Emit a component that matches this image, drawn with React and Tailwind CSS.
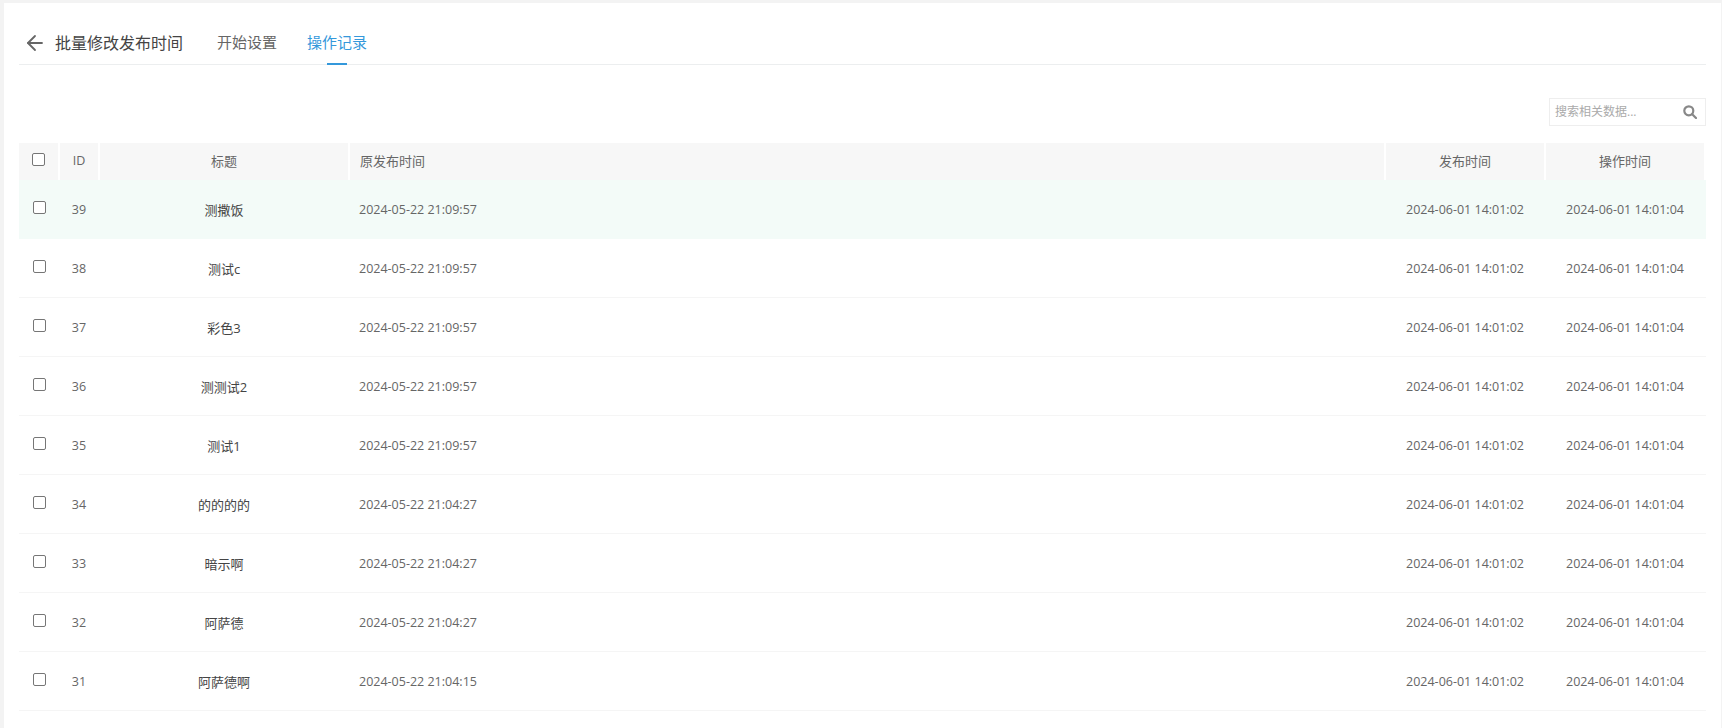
import React from 'react';
import { ArrowLeft } from 'lucide-react';

const rows = [
  { id: 39, title: '测撒饭', origin: '2024-05-22 21:09:57', op: '2024-06-01 14:01:04', active: true },
  { id: 38, title: '测试c', origin: '2024-05-22 21:09:57', op: '2024-06-01 14:01:04' },
  { id: 37, title: '彩色3', origin: '2024-05-22 21:09:57', op: '2024-06-01 14:01:04' },
  { id: 36, title: '测测试2', origin: '2024-05-22 21:09:57', op: '2024-06-01 14:01:04' },
  { id: 35, title: '测试1', origin: '2024-05-22 21:09:57', op: '2024-06-01 14:01:04' },
  { id: 34, title: '的的的的', origin: '2024-05-22 21:04:27', op: '2024-06-01 14:01:04' },
  { id: 33, title: '暗示啊', origin: '2024-05-22 21:04:27', op: '2024-06-01 14:01:04' },
  { id: 32, title: '阿萨德', origin: '2024-05-22 21:04:27', op: '2024-06-01 14:01:04' },
  { id: 31, title: '阿萨德啊', origin: '2024-05-22 21:04:15', op: '2024-06-01 14:01:04' },
];

const Check = ({ className }) => (
  <span className={`block w-[13px] h-[13px] rounded-[2px] border border-[#767676] bg-white ${className}`} />
);

const colClass = 'grid grid-cols-[39px_2px_38px_2px_248px_2px_1034px_2px_158px_2px_158px_2px]';

export default function App() {
  return (
    <div
      className="h-[728px] overflow-hidden bg-[#f3f3f3] pl-1 pt-[3px] pr-px text-[13px] text-[#666]"
      style={{ fontFamily: '"Open Sans", "Noto Sans CJK SC", sans-serif' }}
    >
      <div className="h-full bg-white pl-[15px] pr-[15px]">
        {/* top tabs */}
        <div className="flex h-[62px] items-end border-b border-[#eceeef]">
          <div className="flex h-[35px] items-start">
            <ArrowLeft size={24} strokeWidth={1.8} className="ml-[4px] mt-[2px] text-[#666]" />
            <span className="ml-[8px] mt-[3px] text-[16px] leading-[22px] text-[#444]">批量修改发布时间</span>
            <span className="ml-[34px] mt-[3px] text-[15px] leading-[21px] text-[#666]">开始设置</span>
            <span className="relative ml-[30px] h-full pt-[3px] text-[15px] leading-[21px] text-[#3498db]">
              操作记录
              <span className="absolute bottom-[-1px] left-[20px] h-0.5 w-5 bg-[#3498db]" />
            </span>
          </div>
        </div>

        {/* search */}
        <div className="flex h-[78px] items-start justify-end pt-[33px]">
          <div className="flex h-7 w-[157px] items-center border border-[#eee] pl-[5px] pr-2">
            <span className="flex-1 text-[12px] text-[#aaa]">搜索相关数据...</span>
            <svg width="14" height="14" viewBox="0 0 14 14" fill="none" stroke="#888" strokeWidth="2.2">
              <circle cx="5.8" cy="5.8" r="4.5" />
              <path d="M9.2 9.2l3.8 3.8" strokeLinecap="round" />
            </svg>
          </div>
        </div>

        {/* table */}
        <div className={`${colClass} h-[37px] items-center`}>
          <div className="flex h-full items-center justify-center bg-[#f7f7f7]"><Check className="mb-1" /></div>
          <div />
          <div className="flex h-full items-center justify-center bg-[#f7f7f7] text-[12.5px]">ID</div>
          <div />
          <div className="flex h-full items-center justify-center bg-[#f7f7f7]">标题</div>
          <div />
          <div className="flex h-full items-center bg-[#f7f7f7] pl-2.5">原发布时间</div>
          <div />
          <div className="flex h-full items-center justify-center bg-[#f7f7f7]">发布时间</div>
          <div />
          <div className="flex h-full items-center justify-center bg-[#f7f7f7]">操作时间</div>
          <div />
        </div>
        {rows.map((r) => (
          <div
            key={r.id}
            className={`${colClass} h-[59px] border-b text-[12.5px] ${r.active ? 'border-transparent bg-[#f3fbf8]' : 'border-[#f5f5f5]'}`}
          >
            <div className="flex h-[55px] items-center justify-center"><Check className="ml-0.5" /></div>
            <div />
            <div className="flex h-[57px] items-center justify-center pt-1">{r.id}</div>
            <div />
            <div className="flex h-[57px] items-center justify-center pt-1 text-[13px] text-[#444]">{r.title}</div>
            <div />
            <div className="flex h-[57px] items-center pl-[9px] pt-1">{r.origin}</div>
            <div />
            <div className="flex h-[57px] items-center justify-center pt-1">2024-06-01 14:01:02</div>
            <div />
            <div className="flex h-[57px] items-center justify-center pt-1">{r.op}</div>
            <div />
          </div>
        ))}
      </div>
    </div>
  );
}
